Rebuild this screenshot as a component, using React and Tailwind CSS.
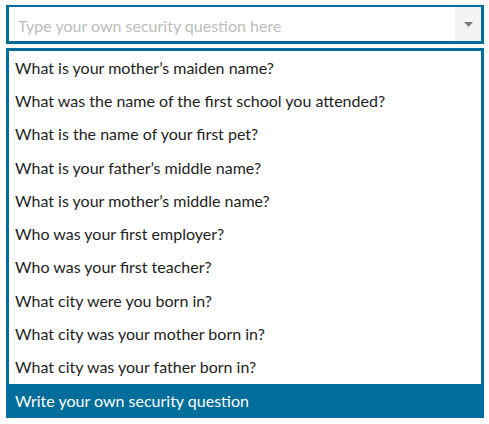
import React from "react";

const questions = [
  "What is your mother’s maiden name?",
  "What was the name of the first school you attended?",
  "What is the name of your first pet?",
  "What is your father’s middle name?",
  "What is your mother’s middle name?",
  "Who was your first employer?",
  "Who was your first teacher?",
  "What city were you born in?",
  "What city was your mother born in?",
  "What city was your father born in?",
];

export default function App() {
  return (
    <div className="w-[489px] h-[424px] bg-white pl-[6px] pt-[5px] font-['Lato','Noto_Sans',sans-serif]">
      <div className="w-[478px]">
        {/* combo input */}
        <div className="flex h-[39px] border-[3px] border-t-2 border-[#006d9a] bg-white">
          <div className="flex-1 flex items-center pl-[9px] pt-[3px] text-[16px] text-[#bdbdbd]">
            Type your own security question here
          </div>
          <div className="w-[26px] bg-[#f3f3f3] flex items-center justify-center">
            <svg width="9" height="5" viewBox="0 0 9 5">
              <path d="M0 0 H9 L4.5 5 Z" fill="#7a7a7a" />
            </svg>
          </div>
        </div>
        <div className="h-[4px]" />
        {/* options list */}
        <div className="border-[3px] border-b-0 border-[#006d9a]">
          {questions.map((q) => (
            <div key={q} className="h-[33.3px] flex items-center pl-[6px] text-[16px] text-[#1e1e1e]">
              {q}
            </div>
          ))}
          <div className="h-[34px] -mx-[3px] flex items-center pl-[9px] bg-[#006d9a] text-[16px] text-white">
            Write your own security question
          </div>
        </div>
      </div>
    </div>
  );
}
